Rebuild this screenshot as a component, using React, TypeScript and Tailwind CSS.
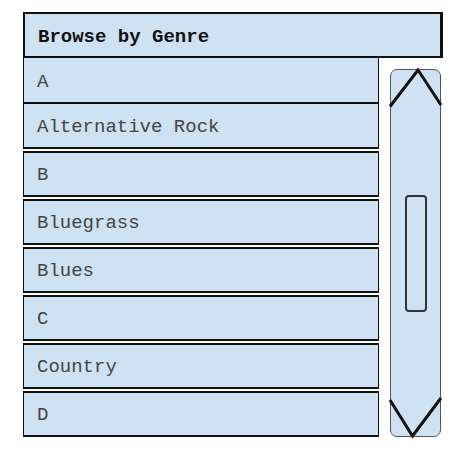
import React from "react";

const items = ["B", "Bluegrass", "Blues", "C", "Country", "D"];

export default function App() {
  return (
    <div
      className="w-[462px] h-[452px] bg-white pt-[12px] pl-[23px]"
      style={{ fontFamily: '"Liberation Mono", "Courier New", monospace' }}
    >
      <div className="w-[420px] h-[46px] border-2 border-r-[3px] border-[#111] bg-[#cfe2f3] flex items-center pl-[13px] pt-[4px] text-[19px] font-bold text-[#111]">
        Browse by Genre
      </div>
      <div className="flex">
        <div className="w-[356px] flex flex-col">
          <div className="h-[46px] border-x border-b-2 border-[#111] bg-[#cfe2f3] flex items-center pl-[13px] pt-[4px] text-[19px] text-[#444]">
            A
          </div>
          <div className="h-[45px] border-x border-b-2 border-[#111] bg-[#cfe2f3] flex items-center pl-[13px] pt-[3px] text-[19px] text-[#444]">
            Alternative Rock
          </div>
          {items.map((t) => (
            <div
              key={t}
              className="mt-[2px] h-[46px] border-x border-y-2 border-[#111] bg-[#cfe2f3] flex items-center pl-[13px] pt-[3px] text-[19px] text-[#444]"
            >
              {t}
            </div>
          ))}
        </div>
        <div className="ml-[11px] mt-[11px] relative w-[51px] h-[368px] rounded-[7px] border border-[#555] bg-[#cfe2f3] flex items-center justify-center">
          <div className="w-[22px] h-[117px] rounded-[4px] border-2 border-[#333] bg-[#cfe2f3]" />
          <svg
            className="absolute -left-px -top-px overflow-visible"
            width="51"
            height="368"
            viewBox="0 0 51 368"
          >
            <polyline
              points="0,37.5 28,1 51,36"
              fill="none"
              stroke="#111"
              strokeWidth="3"
              strokeLinejoin="miter"
            />
            <polyline
              points="0,331 22.5,367 51,329"
              fill="none"
              stroke="#111"
              strokeWidth="3"
              strokeLinejoin="miter"
            />
          </svg>
        </div>
      </div>
    </div>
  );
}
